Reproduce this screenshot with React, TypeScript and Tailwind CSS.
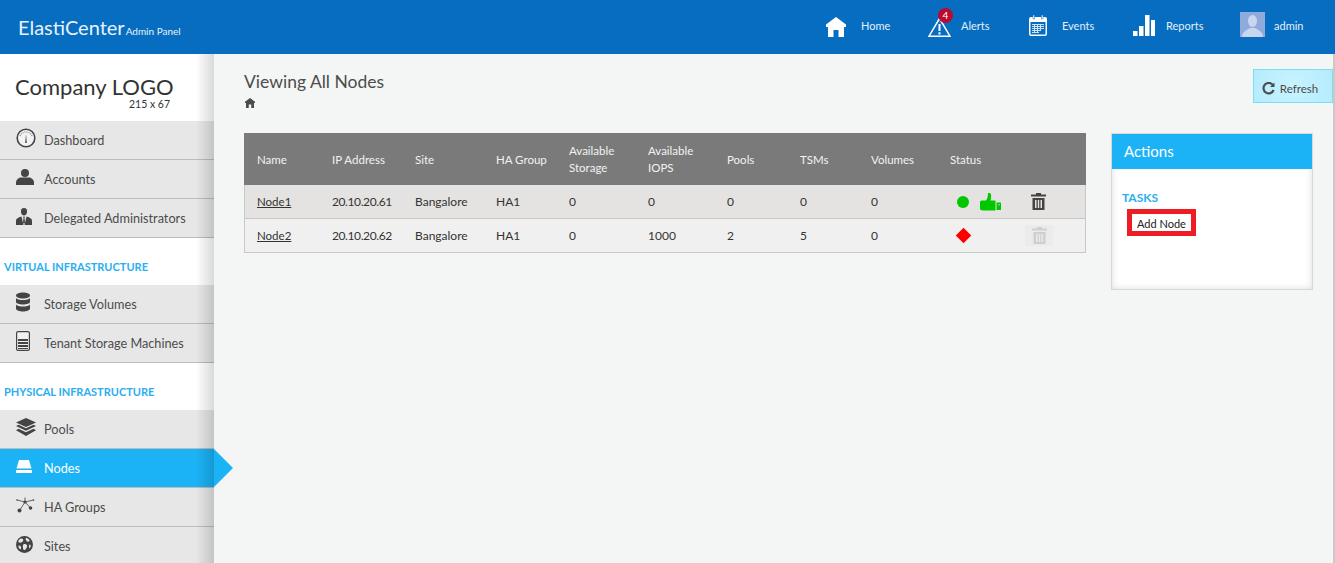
// Admin panel: viewing all nodes
import React from 'react';

const font = { fontFamily: "Lato, sans-serif" };

const DashboardIcon = () => (
  <svg width="20" height="20" viewBox="0 0 20 20" className="text-[#444]">
    <circle cx="10" cy="10" r="8.800" fill="#f3f3f3" stroke="currentColor" strokeWidth="1.600" />
    <path d="M4 8A6.500 6.500 0 0 1 16 8" fill="none" stroke="#888" strokeWidth="1.200" strokeDasharray="1 1" />
    <path d="M10 6L10.800 15H9.200Z" fill="currentColor" />
  </svg>
);

const UserIcon = () => (
  <svg width="18" height="16" viewBox="0 0 18 16" fill="#444">
    <circle cx="9" cy="4" r="4" />
    <path d="M0 16V13.500C0 10.500 3 8.500 5.500 8.500H12.500C15 8.500 18 10.500 18 13.500V16Z" />
  </svg>
);

const AdminIcon = () => (
  <svg width="16" height="17" viewBox="0 0 16 17" fill="#444">
    <path d="M5 2.500C5 .8 6.500 0 8 0s3 .8 3 2.500V4C11 6 9.500 7.500 8 7.500S5 6 5 4Z" />
    <path d="M0 17V12.500C0 10.500 2 9.500 5.500 8.500L7.500 17ZM16 17V12.500C16 10.500 14 9.500 10.500 8.500L8.500 17Z" />
    <path d="M7.200 8.500H8.800L8.500 10L9 14.500L8 16L7 14.500L7.500 10Z" />
  </svg>
);

const DatabaseIcon = () => (
  <svg width="14" height="20" viewBox="0 0 14 19" fill="#444">
    <path d="M0 3C0 1 3.500 0 7 0s7 1 7 3-3.500 3-7 3S0 5 0 3Z" />
    <path d="M0 5.500C1 7 4 7.500 7 7.500S13 7 14 5.500V9.500C14 11 10.500 12 7 12S0 11 0 9.500Z" />
    <path d="M0 12C1 13.500 4 14 7 14S13 13.500 14 12V16C14 17.800 10.500 19 7 19S0 17.800 0 16Z" />
  </svg>
);

const MachineIcon = () => (
  <svg width="14" height="20" viewBox="0 0 14 20">
    <rect x=".6" y=".6" width="12.800" height="18.800" rx="1.500" fill="#f0f0f0" stroke="#444" strokeWidth="1.200" />
    <path d="M2 8H12V10H2ZM2 11H12V13H2ZM2 14H12V16H2ZM2 17H12V18H2Z" fill="#444" />
  </svg>
);

const PoolsIcon = () => (
  <svg width="20" height="18" viewBox="0 0 20 18" fill="#444">
    <path d="M10 0L20 4.500L10 9L0 4.500Z" />
    <path d="M2.500 6.800L10 10.200L17.500 6.800L20 8L10 12.800L0 8Z" />
    <path d="M2.500 10.800L10 14.200L17.500 10.800L20 12.200L10 18L0 12.200Z" />
  </svg>
);

const NodesIcon = () => (
  <svg width="16" height="13" viewBox="0 0 16 13" fill="#fff">
    <path d="M3 0H13L15.500 8.500H.5Z" />
    <rect y="10" width="16" height="3" />
  </svg>
);

const GroupsIcon = () => (
  <svg width="19" height="16" viewBox="0 0 19 16" fill="#444" stroke="#444">
    <path d="M9 5L3.500 13.500M9 5L14.500 11M9 5L1 3M9 5L17.500 3M9 5V.5" strokeWidth=".8" fill="none" />
    <circle cx="9" cy="5" r="1.600" stroke="none" />
    <circle cx="3.500" cy="13.500" r="2" stroke="none" />
    <circle cx="14.500" cy="11" r="1.800" stroke="none" />
    <circle cx="1" cy="3" r=".8" stroke="none" />
    <circle cx="17.500" cy="3" r=".8" stroke="none" />
  </svg>
);

const GlobeIcon = () => (
  <svg width="17" height="17" viewBox="0 0 17 17">
    <circle cx="8.500" cy="8.500" r="8.500" fill="#444" />
    <path d="M4 3C6 2 8 3 7 5S3 7 2.500 6 3 3.500 4 3ZM10 2C12 2 14 4 13.500 5S11 6 10.500 5 9 2.500 10 2ZM8 8C10 7.500 12 9 11 11S9 14.500 8 14 6 9 8 8ZM13.500 8.500C14.500 8 15 9.500 14.500 11S13 12.500 13 11 13 9 13.500 8.500ZM3 9.500C4.500 9.500 5.500 11 5 12.500S3.500 13 3 12 2 9.500 3 9.500Z" fill="#e6e6e6" />
  </svg>
);

const HomeIcon = ({ size, color }: { size: number; color: string }) => (
  <svg width={size} height={size} viewBox="0 0 20 20" fill={color}>
    <path d="M10 0L20 7.500V10H18V20H12.500V13H7.500V20H2V10H0V7.500Z" />
  </svg>
);

const TrashIcon = ({ color }: { color: string }) => (
  <svg width="15" height="17" viewBox="0 0 15 17" fill={color}>
    <path d="M5 0H10V1.500H15V3.500H0V1.500H5Z" />
    <path d="M1.500 5H13.500V17H1.500ZM4 7V15H5.500V7ZM6.800 7V15H8.200V7ZM9.500 7V15H11V7Z" fillRule="evenodd" />
  </svg>
);

const navTop = [
  { label: 'Dashboard', icon: <DashboardIcon /> },
  { label: 'Accounts', icon: <UserIcon /> },
  { label: 'Delegated Administrators', icon: <AdminIcon /> },
];
const navVirtual = [
  { label: 'Storage Volumes', icon: <DatabaseIcon /> },
  { label: 'Tenant Storage Machines', icon: <MachineIcon /> },
];
const navPhysical = [
  { label: 'Pools', icon: <PoolsIcon /> },
  { label: 'Nodes', icon: <NodesIcon />, active: true },
  { label: 'HA Groups', icon: <GroupsIcon /> },
  { label: 'Sites', icon: <GlobeIcon /> },
];

const NavItem = ({ label, icon, active }: { label: string; icon: React.ReactNode; active?: boolean }) => (
  <div
    className={`relative flex h-[39px] shrink-0 items-center border-b border-[#bcbcbc] text-[12.7px] ${
      active ? 'bg-[#1bb3f6] text-white' : 'bg-[#e7e7e7] text-[#4c4c4c]'
    }`}
  >
    <div className="flex w-[44px] shrink-0 pb-[4px] pl-[16px]">{icon}</div>
    <span className="pt-[1px]">{label}</span>
    {active && (
      <div className="absolute left-full top-0 h-0 w-0 border-y-[19px] border-l-[19px] border-y-transparent border-l-[#1bb3f6]" />
    )}
  </div>
);

const SectionLabel = ({ children }: { children: React.ReactNode }) => (
  <div className="flex h-[47px] shrink-0 items-center pl-[4px] pt-[11px] text-[11px] font-bold text-[#29aef0]">{children}</div>
);

const TopLink = ({ icon, label, gap, width }: { icon: React.ReactNode; label: string; gap: string; width: string }) => (
  <div className={`flex items-center ${gap} ${width}`}>
    {icon}
    <span className="pb-[1px] text-[11px] text-[#e4f0fa]">{label}</span>
  </div>
);

const columns = [
  { label: 'Name', w: 'w-[75px]' },
  { label: 'IP Address', w: 'w-[83px]' },
  { label: 'Site', w: 'w-[81px]' },
  { label: 'HA Group', w: 'w-[73px]' },
  { label: 'Available Storage', w: 'w-[79px]' },
  { label: 'Available IOPS', w: 'w-[79px]' },
  { label: 'Pools', w: 'w-[73px]' },
  { label: 'TSMs', w: 'w-[71px]' },
  { label: 'Volumes', w: 'w-[79px]' },
  { label: 'Status', w: 'w-[149px]' },
];

const nodes = [
  { name: 'Node1', ip: '20.10.20.61', iops: '0', pools: '0', tsms: '0', up: true, bg: 'bg-[#e4e3e1]' },
  { name: 'Node2', ip: '20.10.20.62', iops: '1000', pools: '2', tsms: '5', up: false, bg: 'bg-[#f0f0f0]' },
];

const App: React.FC = () => (
  <div className="flex h-[563px] flex-col overflow-hidden bg-[#f4f5f5]" style={font}>
    {/* Top bar */}
    <header className="flex h-[54px] shrink-0 items-center justify-between bg-[#066dc0] pl-[18px]">
      <div className="flex items-baseline pb-[1px] text-[#e8f2fb]">
        <span className="text-[20px]">ElastiCenter</span>
        <span className="ml-[1px] text-[10px]">Admin Panel</span>
      </div>
      <nav className="flex items-center">
        <TopLink width="w-[102px]" gap="gap-[15px]" label="Home" icon={<HomeIcon size={20} color="#fff" />} />
        <TopLink
          width="w-[101px]"
          gap="gap-[10px]"
          label="Alerts"
          icon={
            <div className="relative">
              <svg width="23" height="20" viewBox="0 0 23 20" className="block">
                <path d="M11.500 1.500L22 19.200H1Z" fill="none" stroke="#fff" strokeWidth="1.500" />
                <path d="M10.500 7H12.500V14H10.500ZM10.500 15.200H12.500V17.500H10.500Z" fill="#fff" />
              </svg>
              <div className="absolute left-[10px] top-[-9px] flex h-[15px] w-[15px] items-center justify-center rounded-full bg-[#bb0a2e] text-[10px] text-white">
                4
              </div>
            </div>
          }
        />
        <TopLink
          width="w-[104px]"
          gap="gap-[15px]"
          label="Events"
          icon={
            <svg width="18" height="21" viewBox="0 0 18 21" className="-mt-[3px]">
              <rect x="0" y="2" width="18" height="19" rx="2" fill="#fff" />
              <rect x="1.500" y="7" width="15" height="12.500" fill="#066dc0" />
              <path d="M4 0H5.500V4H4ZM12.500 0H14V4H12.500Z" fill="#fff" stroke="#066dc0" strokeWidth=".5" />
              <path d="M3 9H15V10H3ZM3 11H15V12H3ZM3 13H15V14H3ZM3 15H12V16H3ZM3 17H10V18H3ZM5 9H6V18H5ZM8 9H9V18H8ZM11 9H12V16H11Z" fill="#cfe3f5" />
            </svg>
          }
        />
        <TopLink
          width="w-[107px]"
          gap="gap-[11px]"
          label="Reports"
          icon={
            <svg width="22" height="21" viewBox="0 0 22 21" fill="#fff" className="-mt-[3px]">
              <path d="M0 16H4.500V21H0ZM6 11H10.500V21H6ZM12 0H16.500V21H12ZM18 5H22V21H18Z" />
            </svg>
          }
        />
        <TopLink
          width="w-[95px]"
          gap="gap-[9px]"
          label="admin"
          icon={
            <div className="-mt-[5px] h-[25px] w-[25px] overflow-hidden bg-[#8fabdc]">
              <svg width="25" height="25" viewBox="0 0 25 25" fill="#c9d6ef">
                <ellipse cx="12.500" cy="9" rx="4.500" ry="6" />
                <path d="M2 25C2 19 7 18.500 10 16H15C18 18.500 23 19 23 25Z" />
              </svg>
            </div>
          }
        />
      </nav>
    </header>

    <div className="flex min-h-0 flex-1">
      {/* Sidebar */}
      <aside className="relative z-10 flex w-[214px] shrink-0 flex-col bg-white">
        <div className="flex h-[67px] shrink-0 flex-col pl-[15px] pt-[22px] text-[#333]">
          <span className="text-[22px] leading-[22px]">Company LOGO</span>
          <span className="ml-[114px] text-[10.5px] leading-[12px]">215 x 67</span>
        </div>
        {navTop.map((item) => (
          <NavItem key={item.label} {...item} />
        ))}
        <SectionLabel>VIRTUAL INFRASTRUCTURE</SectionLabel>
        {navVirtual.map((item) => (
          <NavItem key={item.label} {...item} />
        ))}
        <SectionLabel>PHYSICAL INFRASTRUCTURE</SectionLabel>
        {navPhysical.map((item) => (
          <NavItem key={item.label} {...item} />
        ))}
        {/* inner shadow along the right edge */}
        <div className="pointer-events-none absolute inset-y-0 right-0 w-[18px] bg-gradient-to-r from-transparent to-black/15" />
      </aside>

      {/* Content */}
      <main className="min-w-0 flex-1 border-r-2 border-[#c9c9c9] pl-[30px]">
        <div className="flex h-[79px] justify-between">
          <div className="pt-[16px] text-[#4c4c4c]">
            <h1 className="text-[17.500px] leading-[24px]">Viewing All Nodes</h1>
            <div className="mt-[4px] pl-[1px]">
              <HomeIcon size={10} color="#4c4c4c" />
            </div>
          </div>
          <button className="mt-[15px] flex h-[34px] w-[80px] items-center justify-center gap-[5px] border border-[#7adff5] bg-[radial-gradient(circle,#c8f3ff,#b4ecfd)] pr-[6px] pt-[5px] text-[11.500px] text-[#4c4c4c]">
            <svg width="13" height="13" viewBox="0 0 13 13" fill="none" stroke="#4c4c4c" strokeWidth="2.200">
              <path d="M11 3.200A5.200 5.200 0 1 0 11.600 8" />
              <path d="M12.500 .5V5H8Z" fill="#4c4c4c" stroke="none" />
            </svg>
            Refresh
          </button>
        </div>

        <div className="flex items-start gap-[25px]">
          <table className="w-[842px] table-fixed border-separate border-spacing-0 text-[12px] text-[#333]">
            <thead>
              <tr className="h-[52px] bg-[#7a7a7a] text-left text-[11.500px] text-[#f2f2f2]">
                {columns.map((col) => (
                  <th key={col.label} className={`${col.w} pl-[13px] pr-[4px] font-normal leading-[17px]`}>
                    {col.label}
                  </th>
                ))}
              </tr>
            </thead>
            <tbody>
              {nodes.map((node) => (
                <tr key={node.name} className={`h-[34px] ${node.bg}`}>
                  <td className="border-b border-l border-[#c8c8c8] pl-[12px] text-[11.500px] underline">{node.name}</td>
                  <td className="border-b border-[#c8c8c8] pl-[13px] tracking-[-0.4px]">{node.ip}</td>
                  <td className="border-b border-[#c8c8c8] pl-[13px]">Bangalore</td>
                  <td className="border-b border-[#c8c8c8] pl-[13px]">HA1</td>
                  <td className="border-b border-[#c8c8c8] pl-[13px]">0</td>
                  <td className="border-b border-[#c8c8c8] pl-[13px]">{node.iops}</td>
                  <td className="border-b border-[#c8c8c8] pl-[13px]">{node.pools}</td>
                  <td className="border-b border-[#c8c8c8] pl-[13px]">{node.tsms}</td>
                  <td className="border-b border-[#c8c8c8] pl-[13px]">0</td>
                  <td className="border-b border-r border-[#c8c8c8]">
                    <div className="flex items-center pl-[20px]">
                      <div className="flex w-[74px] items-center gap-[11px]">
                        {node.up ? (
                          <>
                            <div className="h-[12px] w-[12px] rounded-full bg-[#00c800]" />
                            <svg width="21" height="18" viewBox="0 0 21 18" fill="#00c800">
                              <path d="M0 9C0 8 1 7.500 2.500 7.500H6C7.500 5.500 8 3 8 0H10C11.500 1 11.500 4.500 10.500 7.500H15.500V17.500H3C1 17.500 0 16.500 0 15.500Z" />
                              <path d="M16.500 9.500H21V17H16.500ZM18.500 11V12.500H19.500V11Z" fillRule="evenodd" />
                            </svg>
                          </>
                        ) : (
                          <div className="ml-[1px] h-[11px] w-[11px] rotate-45 bg-[#ff0000]" />
                        )}
                      </div>
                      {node.up ? (
                        <TrashIcon color="#444" />
                      ) : (
                        <div className="-ml-[6px] flex h-[21px] w-[28px] items-center justify-center bg-[#ebebeb]">
                          <TrashIcon color="#cfcfcf" />
                        </div>
                      )}
                    </div>
                  </td>
                </tr>
              ))}
            </tbody>
          </table>

          {/* Actions panel */}
          <section className="h-[157px] w-[202px] shrink-0 border border-[#d8d8d8] bg-white shadow-[inset_0_0_6px_rgba(0,0,0,0.15)]">
            <h2 className="flex h-[35px] items-center bg-[#1bb3f6] pl-[12px] text-[15px] text-white">Actions</h2>
            <div className="pl-[10px] pt-[21px]">
              <div className="text-[12px] font-bold leading-[16px] text-[#29aef0]">TASKS</div>
              <div className="ml-[5px] mt-[3px] w-fit border-[5px] border-[#ee1c25] px-[5px] pt-[3px] text-[11px] leading-[14px] text-[#222]">
                Add Node
              </div>
            </div>
          </section>
        </div>
      </main>
    </div>
  </div>
);

export default App;
